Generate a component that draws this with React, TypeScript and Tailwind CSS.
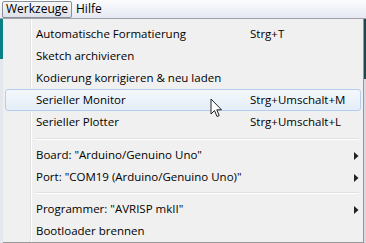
type Item = { label: string; shortcut?: string; sub?: boolean; active?: boolean } | "sep";

const items: Item[] = [
  { label: "Automatische Formatierung", shortcut: "Strg+T" },
  { label: "Sketch archivieren" },
  { label: "Kodierung korrigieren & neu laden" },
  { label: "Serieller Monitor", shortcut: "Strg+Umschalt+M", active: true },
  { label: "Serieller Plotter", shortcut: "Strg+Umschalt+L" },
  "sep",
  { label: 'Board: "Arduino/Genuino Uno"', sub: true },
  { label: 'Port: "COM19 (Arduino/Genuino Uno)"', sub: true },
  "sep",
  { label: 'Programmer: "AVRISP mkII"', sub: true },
  { label: "Bootloader brennen" },
];

const Pointer = () => (
  <svg width="13" height="20" viewBox="0 0 13 20" className="absolute left-[207px] top-[79px]">
    <path d="M1 1 L1 16 L4.5 12.5 L7 18.5 L9.2 17.6 L6.8 11.8 L11.5 11.8 Z" fill="#fff" stroke="#222" strokeWidth="1" strokeLinejoin="round" />
  </svg>
);

const App = () => {
  return (
    <div className="w-[366px] h-[243px] overflow-hidden bg-[#f0f0f0] flex flex-col text-[11.5px] text-black" style={{ fontFamily: '"Open Sans", "Noto Sans", sans-serif' }}>
      {/* menu bar */}
      <div className="h-[19px] flex items-center gap-[4px] px-[2px] text-[12px] bg-gradient-to-b from-[#fbfcfe] to-[#e6e9f3] border-b border-[#a0a3aa]">
        <div className="h-[17px] px-[3px] flex items-center border border-[#8a8f99] rounded-[2px] bg-gradient-to-b from-[#f6f7f9] to-[#dde1e8] leading-none">Werkzeuge</div>
        <div className="leading-none">Hilfe</div>
      </div>
      <div className="flex-1 flex">
        <div className="w-[3px] flex flex-col">
          <div className="h-[40px] bg-[#0a7f83]" />
          <div className="flex-1 bg-[#e4e8ec]" />
        </div>
        <div className="flex-1 relative bg-[#f0f0f0] border-r border-b border-[#979797] pt-[4px] pl-[2px] pr-[2px]">
          <div className="absolute left-[27px] top-0 bottom-0 w-[2px] flex">
            <div className="w-[1px] bg-[#e2e3e3]" />
            <div className="w-[1px] bg-white" />
          </div>
          {items.map((it, i) =>
            it === "sep" ? (
              <div key={i} className={`${i === 5 ? "h-[11px]" : "h-[10px]"} flex flex-col justify-center pl-[31px] pr-[2px]`}>
                <div className="h-[1px] bg-[#e0e0e0]" />
                <div className="h-[1px] bg-white" />
              </div>
            ) : (
              <div
                key={i}
                className={`relative h-[22px] flex items-center rounded-[3px] border ${it.active ? "border-[#b4cdec] bg-gradient-to-b from-[#f4f8fd] to-[#e4edf8]" : "border-transparent"}`}
              >
                <span className="pl-[30px] w-[244px] whitespace-nowrap">{it.label}</span>
                {it.shortcut && <span className="whitespace-nowrap">{it.shortcut}</span>}
                {it.sub && (
                  <svg width="5" height="8" viewBox="0 0 5 8" className="absolute right-[1px] top-[7px]">
                    <path d="M0 0 L4.5 4 L0 8 Z" fill="#222" />
                  </svg>
                )}
              </div>
            )
          )}
          <Pointer />
        </div>
        <div className="w-[2px] flex flex-col">
          <div className="h-[60px] bg-[#1d4a4c]" />
          <div className="flex-1 bg-[#d8dadd]" />
        </div>
      </div>
    </div>
  );
};

export default App;
